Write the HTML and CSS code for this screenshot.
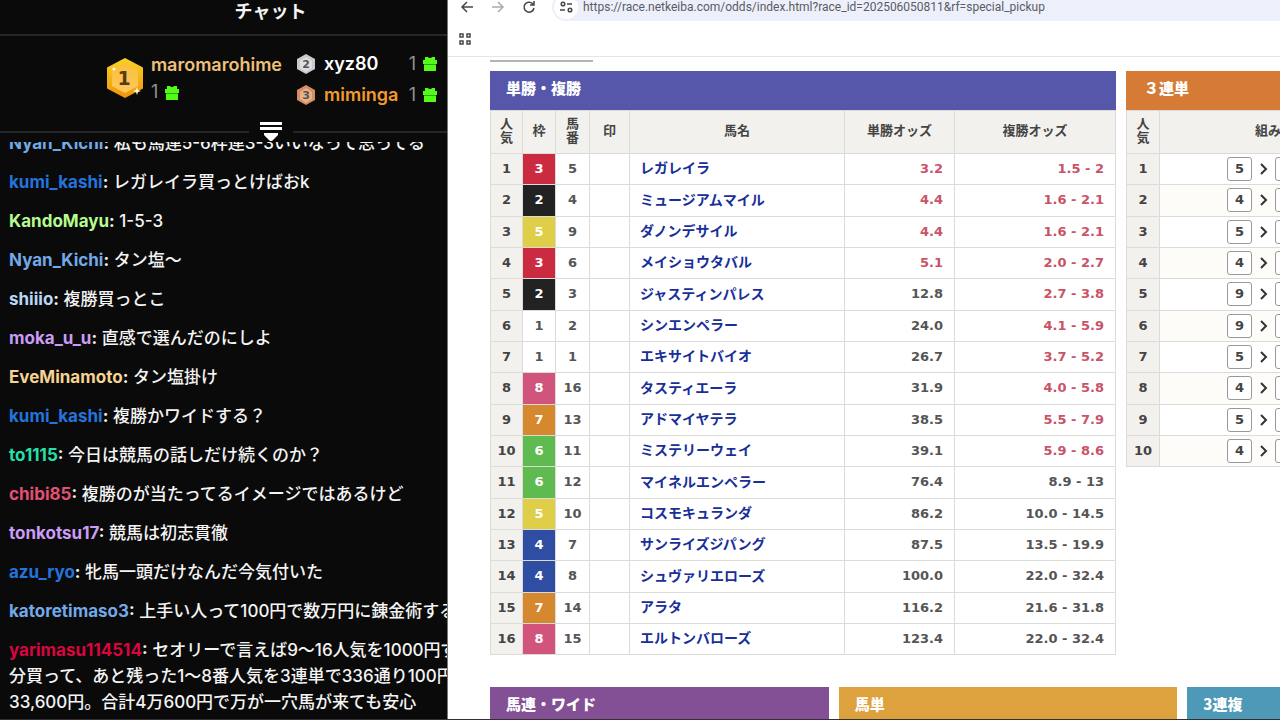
FILE: index.html
```
<!DOCTYPE html>
<html lang="ja">
<head>
<meta charset="utf-8">
<title>チャット</title>
<link rel="stylesheet" href="styles.css">
</head>
<body>
<svg class="defs" aria-hidden="true">
  <defs>
    <linearGradient id="gold" x1="0" y1="0" x2="0" y2="1"><stop offset="0" stop-color="#f9d423"/><stop offset="1" stop-color="#f0930c"/></linearGradient>
    <linearGradient id="goldin" x1="0" y1="0" x2="0" y2="1"><stop offset="0" stop-color="#fbbf38"/><stop offset="1" stop-color="#fdc861"/></linearGradient>
    <symbol id="gift" viewBox="0 0 14 15"><path fill="#53fc18" d="M2 1h3l1 1h2l1-1h3v3h2v4H0V4h2zM1 9h12v6H1z"/><path fill="#2da80c" d="M1 8h12v1H1z"/></symbol>
    <symbol id="chev" viewBox="0 0 10 12"><path d="M2 1l5 5-5 5" fill="none" stroke="#333" stroke-width="2"/></symbol>
  </defs>
</svg>
<div class="app">
  <aside class="chat">
    <h1 class="chat-title">チャット</h1>
    <section class="leaders">
      <div class="leader first">
        <svg class="medal-lg" viewBox="0 0 36 40"><path d="M18 0l18 9.500v21L18 40 0 30.500v-21z" fill="url(#gold)"/><path d="M18 5l13 7v16l-13 7-13-7V12z" fill="url(#goldin)"/><path d="M30 29l1 3 3 1-3 1-1 3-1-3-3-1 3-1zM7 9l1 1 1 1-1 1-1 1-1-1-1-1 1-1z" fill="#fff8dc"/><text x="17" y="27" text-anchor="middle" class="medal-num big">1</text></svg>
        <div class="leader-text">
          <span class="leader-name gold">maromarohime</span>
          <span class="gifts">1 <svg class="gift"><use href="#gift"/></svg></span>
        </div>
      </div>
      <div class="leader-list">
        <svg class="medal" viewBox="0 0 20 22"><path d="M10 1l9 5v10l-9 5-9-5V6z" fill="#c9cacc"/><path d="M10 4l6 4v7l-6 4-6-4V8z" fill="#dedfe1"/><text x="10" y="15" text-anchor="middle" class="medal-num">2</text></svg>
        <span class="leader-name white">xyz80</span>
        <span class="gifts">1 <svg class="gift"><use href="#gift"/></svg></span>
        <svg class="medal" viewBox="0 0 20 22"><path d="M10 1l9 5v10l-9 5-9-5V6z" fill="#d98d5f"/><path d="M10 4l6 4v7l-6 4-6-4V8z" fill="#e5b18b"/><text x="10" y="15" text-anchor="middle" class="medal-num">3</text></svg>
        <span class="leader-name orange">miminga</span>
        <span class="gifts">1 <svg class="gift"><use href="#gift"/></svg></span>
      </div>
    </section>
    <div class="divider">
      <button class="collapse" aria-label="展開"><svg viewBox="0 0 22 20"><path fill="#fff" d="M0 0h22v3H0zM0 5h22v3H0zM4 11h14v2l-6 6h-2l-6-6z"/></svg></button>
    </div>
    <div class="messages">
      <p><b class="c-sky">Nyan_Kichi</b><b>:</b> 私も馬連5-6枠連3-3いいなって思ってる</p>
      <p><b class="c-blue">kumi_kashi</b><b>:</b> レガレイラ買っとけばおk</p>
      <p><b class="c-lime">KandoMayu</b><b>:</b> 1-5-3</p>
      <p><b class="c-sky">Nyan_Kichi</b><b>:</b> タン塩～</p>
      <p><b class="c-ice">shiiio</b><b>:</b> 複勝買っとこ</p>
      <p><b class="c-violet">moka_u_u</b><b>:</b> 直感で選んだのにしよ</p>
      <p><b class="c-sand">EveMinamoto</b><b>:</b> タン塩掛け</p>
      <p><b class="c-blue">kumi_kashi</b><b>:</b> 複勝かワイドする？</p>
      <p><b class="c-teal">to1115</b><b>:</b> 今日は競馬の話しだけ続くのか？</p>
      <p><b class="c-rose">chibi85</b><b>:</b> 複勝のが当たってるイメージではあるけど</p>
      <p><b class="c-violet">tonkotsu17</b><b>:</b> 競馬は初志貫徹</p>
      <p><b class="c-blue">azu_ryo</b><b>:</b> 牝馬一頭だけなんだ今気付いた</p>
      <p><b class="c-sky">katoretimaso3</b><b>:</b> 上手い人って100円で数万円に錬金術する</p>
      <p><b class="c-red">yarimasu114514</b><b>:</b> セオリーで言えば9～16人気を1000円ず<br>分買って、あと残った1～8番人気を3連単で336通り100円<br>33,600円。合計4万600円で万が一穴馬が来ても安心</p>
    </div>
  </aside>

  <main class="browser">
    <div class="toolbar">
      <button aria-label="戻る"><svg viewBox="0 0 16 16"><path d="M14 8H3M8 3L3 8l5 5" class="ln"/></svg></button>
      <button class="dim" aria-label="進む"><svg viewBox="0 0 16 16"><path d="M2 8h11M8 3l5 5-5 5" class="ln"/></svg></button>
      <button aria-label="再読み込み"><svg viewBox="0 0 16 16"><path d="M13 9a5 5 0 1 1-1.500-4.500L13 6M13 2v4H9" class="ln"/></svg></button>
      <div class="omnibox">
        <button class="site" aria-label="サイト情報"><svg viewBox="0 0 16 16"><circle cx="5" cy="5" r="1.800" class="ln"/><path d="M9 5h5M2 11h5" class="ln"/><circle cx="12" cy="11" r="1.800" class="ln"/></svg></button>
        <input type="text" aria-label="アドレス" value="https://race.netkeiba.com/odds/index.html?race_id=202506050811&amp;rf=special_pickup">
      </div>
    </div>
    <div class="bookmarks"><button aria-label="アプリ"><svg viewBox="0 0 14 14"><path d="M2 2h3v3H2zM9 2h3v3H9zM2 9h3v3H2zM9 9h3v3H9z" class="ln"/></svg></button></div>
    <div class="page">
      <div class="tab-edge"></div>
      <div class="row top">
        <section>
          <h2 class="bg-indigo">単勝・複勝</h2>
          <table class="odds">
            <colgroup><col class="w-rank"><col class="w-frame"><col class="w-num"><col class="w-mark"><col><col class="w-win"><col class="w-place"></colgroup>
            <thead><tr><th>人<br>気</th><th>枠</th><th>馬<br>番</th><th>印</th><th>馬名</th><th>単勝オッズ</th><th>複勝オッズ</th></tr></thead>
            <tbody>
              <tr><th>1</th><td class="f3">3</td><td>5</td><td></td><td><a href="#">レガレイラ</a></td><td class="hot">3.2</td><td class="hot">1.5 - 2</td></tr>
              <tr><th>2</th><td class="f2">2</td><td>4</td><td></td><td><a href="#">ミュージアムマイル</a></td><td class="hot">4.4</td><td class="hot">1.6 - 2.1</td></tr>
              <tr><th>3</th><td class="f5">5</td><td>9</td><td></td><td><a href="#">ダノンデサイル</a></td><td class="hot">4.4</td><td class="hot">1.6 - 2.1</td></tr>
              <tr><th>4</th><td class="f3">3</td><td>6</td><td></td><td><a href="#">メイショウタバル</a></td><td class="hot">5.1</td><td class="hot">2.0 - 2.7</td></tr>
              <tr><th>5</th><td class="f2">2</td><td>3</td><td></td><td><a href="#">ジャスティンパレス</a></td><td>12.8</td><td class="hot">2.7 - 3.8</td></tr>
              <tr><th>6</th><td>1</td><td>2</td><td></td><td><a href="#">シンエンペラー</a></td><td>24.0</td><td class="hot">4.1 - 5.9</td></tr>
              <tr><th>7</th><td>1</td><td>1</td><td></td><td><a href="#">エキサイトバイオ</a></td><td>26.7</td><td class="hot">3.7 - 5.2</td></tr>
              <tr><th>8</th><td class="f8">8</td><td>16</td><td></td><td><a href="#">タスティエーラ</a></td><td>31.9</td><td class="hot">4.0 - 5.8</td></tr>
              <tr><th>9</th><td class="f7">7</td><td>13</td><td></td><td><a href="#">アドマイヤテラ</a></td><td>38.5</td><td class="hot">5.5 - 7.9</td></tr>
              <tr><th>10</th><td class="f6">6</td><td>11</td><td></td><td><a href="#">ミステリーウェイ</a></td><td>39.1</td><td class="hot">5.9 - 8.6</td></tr>
              <tr><th>11</th><td class="f6">6</td><td>12</td><td></td><td><a href="#">マイネルエンペラー</a></td><td>76.4</td><td>8.9 - 13</td></tr>
              <tr><th>12</th><td class="f5">5</td><td>10</td><td></td><td><a href="#">コスモキュランダ</a></td><td>86.2</td><td>10.0 - 14.5</td></tr>
              <tr><th>13</th><td class="f4">4</td><td>7</td><td></td><td><a href="#">サンライズジパング</a></td><td>87.5</td><td>13.5 - 19.9</td></tr>
              <tr><th>14</th><td class="f4">4</td><td>8</td><td></td><td><a href="#">シュヴァリエローズ</a></td><td>100.0</td><td>22.0 - 32.4</td></tr>
              <tr><th>15</th><td class="f7">7</td><td>14</td><td></td><td><a href="#">アラタ</a></td><td>116.2</td><td>21.6 - 31.8</td></tr>
              <tr><th>16</th><td class="f8">8</td><td>15</td><td></td><td><a href="#">エルトンバローズ</a></td><td>123.4</td><td>22.0 - 32.4</td></tr>
            </tbody>
          </table>
        </section>
        <section>
          <h2 class="bg-orange">３連単</h2>
          <table class="combo">
            <colgroup><col class="w-rank"><col></colgroup>
            <thead><tr><th>人<br>気</th><th>組み合わせ</th></tr></thead>
            <tbody>
              <tr><th>1</th><td><div class="pick"><i>5</i><svg><use href="#chev"/></svg><i></i></div></td></tr>
              <tr><th>2</th><td><div class="pick"><i>4</i><svg><use href="#chev"/></svg><i></i></div></td></tr>
              <tr><th>3</th><td><div class="pick"><i>5</i><svg><use href="#chev"/></svg><i></i></div></td></tr>
              <tr><th>4</th><td><div class="pick"><i>4</i><svg><use href="#chev"/></svg><i></i></div></td></tr>
              <tr><th>5</th><td><div class="pick"><i>9</i><svg><use href="#chev"/></svg><i></i></div></td></tr>
              <tr><th>6</th><td><div class="pick"><i>9</i><svg><use href="#chev"/></svg><i></i></div></td></tr>
              <tr><th>7</th><td><div class="pick"><i>5</i><svg><use href="#chev"/></svg><i></i></div></td></tr>
              <tr><th>8</th><td><div class="pick"><i>4</i><svg><use href="#chev"/></svg><i></i></div></td></tr>
              <tr><th>9</th><td><div class="pick"><i>5</i><svg><use href="#chev"/></svg><i></i></div></td></tr>
              <tr><th>10</th><td><div class="pick"><i>4</i><svg><use href="#chev"/></svg><i></i></div></td></tr>
            </tbody>
          </table>
        </section>
      </div>
      <div class="row bottom">
        <h2 class="bg-purple">馬連・ワイド</h2>
        <h2 class="bg-gold">馬単</h2>
        <h2 class="bg-cyan">3連複</h2>
      </div>
    </div>
  </main>
</div>
</body>
</html>
```

FILE: styles.css
```
* { box-sizing: border-box; }
body { margin: 0; overflow: hidden; background: #fff; }
h1, h2, p { margin: 0; }
button { border: 0; padding: 0; background: none; display: flex; align-items: center; justify-content: center; }
.defs { position: absolute; width: 0; height: 0; }
.app { display: flex; height: 100vh; overflow: hidden; border-bottom: 1px solid #332f33; }

/* chat */
.chat { flex: 0 0 35%; min-width: 0; overflow: hidden; display: flex; flex-direction: column; background: #0a0a0a; border-right: 1px solid #777; color: #f4f4f4; font-family: Inter, "Noto Sans CJK JP", sans-serif; }
.chat-title { padding: 0 0 11px 94px; line-height: 23px; font-size: 18px; font-weight: 700; text-align: center; border-bottom: 2px solid #262626; }
.leaders { display: flex; justify-content: flex-end; gap: 14px; padding: 12px 10px 0 0; height: 86px; }
.first { display: flex; align-items: center; gap: 8px; height: 60px; }
.leader-text { display: flex; flex-direction: column; }
.leader-text .leader-name { line-height: 28px; }
.leader-text .gifts { line-height: 26px; }
.medal-lg { width: 36px; height: 40px; }
.medal { width: 20px; height: 22px; }
.medal-num { font: 700 11px "DejaVu Sans", sans-serif; fill: #555; }
.medal-num.big { font-size: 19px; fill: #5a3c10; }
.leader-name { font-size: 18px; font-weight: 600; }
.gold { color: #eec07a; }
.white { color: #fff; }
.orange { color: #f39a2c; }
.gifts { display: flex; align-items: center; gap: 7px; font-size: 18px; color: #929292; }
.gift { width: 14px; height: 15px; }
.leader-list { display: grid; grid-template-columns: 20px 75px 30px; grid-auto-rows: 31px; column-gap: 8px; align-items: center; }
.leader-list .gifts { justify-content: flex-end; }
.divider { display: flex; align-items: center; height: 20px; }
.divider::before, .divider::after { content: ""; height: 2px; background: #262626; }
.divider::before { width: 249px; margin-right: 11px; }
.divider::after { flex: 1; margin-left: 11px; }
.collapse svg { width: 22px; height: 20px; }
.messages { flex: 1; min-height: 0; overflow: hidden; display: flex; flex-direction: column; justify-content: flex-end; gap: 13px; padding: 0 0 4px 9px; font-size: 17px; line-height: 26px; font-weight: 500; white-space: nowrap; }
.messages b { font-weight: 700; }
.c-sky { color: #72a9e8; }
.c-blue { color: #2374dc; }
.c-lime { color: #b5fb8f; }
.c-ice { color: #b9d8f5; }
.c-violet { color: #cb9cf5; }
.c-sand { color: #f7d390; }
.c-teal { color: #27dfa8; }
.c-rose { color: #e35075; }
.c-red { color: #d8063f; }

/* browser */
.browser { flex: 1; min-width: 0; overflow: hidden; display: flex; flex-direction: column; }
.toolbar { display: flex; align-items: center; height: 28px; margin-top: -7px; padding-left: 11px; gap: 15px; flex: none; }
.toolbar > button, .site svg { width: 16px; height: 16px; }
.toolbar svg { width: 16px; height: 16px; }
.ln { fill: none; stroke: #474747; stroke-width: 1.5; }
.dim { opacity: .45; }
.omnibox { flex: 1; height: 28px; display: flex; align-items: center; gap: 5px; padding-left: 2px; background: #edf0fb; border-radius: 14px 0 0 14px; }
.site { width: 24px; height: 24px; border-radius: 50%; background: #fff; }
.omnibox input { flex: 1; min-width: 0; border: 0; padding: 0; background: none; color: #5a5c62; font: 12px Roboto, sans-serif; }
.bookmarks { flex: none; height: 36px; padding: 11px 0 0 10px; border-bottom: 1px solid #e6e6e6; }
.bookmarks svg { width: 14px; height: 14px; }
.page { width: 1078px; padding: 3px 0 0 42px; font-family: "DejaVu Sans", "Noto Sans CJK JP", sans-serif; }
.tab-edge { width: 103px; height: 2px; background: #b4b4b4; }
.row { display: grid; gap: 10px; align-items: start; }
.top { grid-template-columns: 626px 1fr; margin-top: 9px; }
.bottom { grid-template-columns: repeat(3, 1fr); margin-top: 32px; }
h2 { height: 39px; padding-left: 16px; line-height: 34px; color: #fff; font-family: "Noto Sans CJK JP", sans-serif; font-size: 15px; font-weight: 900; }
.bg-indigo { background: #5657aa; }
.bg-orange { background: #d57b35; padding-left: 18px; }
.bg-purple { background: #835095; }
.bg-gold { background: #dda23e; }
.bg-cyan { background: #4f99b8; }
table { width: 100%; table-layout: fixed; border-collapse: collapse; font-size: 13px; font-weight: 700; color: #555; }
.w-rank { width: 32px; }
.w-frame { width: 33px; }
.w-num { width: 34px; }
.w-mark { width: 40px; }
.w-win { width: 110px; }
.w-place { width: 161px; }
th, td { padding: 0 0 1px; border: 1px solid #dbdbd7; text-align: center; line-height: 18px; }
th { background: #f2f1ed; color: #444; }
thead th { height: 43px; line-height: 14px; padding-bottom: 2px; }
tbody tr { height: 31px; }
tbody tr:nth-child(3n+2) { height: 32px; }
.odds td:nth-child(5) { padding-left: 10px; text-align: left; }
.odds td:nth-child(n+6) { padding-right: 11px; text-align: right; }
.odds a { color: #182f98; font-size: 14px; text-decoration: none; }
.odds td.hot { color: #c95367; }
.f2, .f3, .f4, .f5, .f6, .f7, .f8 { color: #fff; }
.f2 { background: #222; }
.f3 { background: #cb2b40; }
.f4 { background: #2e4da3; }
.f5 { background: #dfce48; }
.f6 { background: #5fba50; }
.f7 { background: #d5882e; }
.f8 { background: #d0547c; }
.combo { width: 290px; }
.combo .w-rank { width: 33px; }
.combo tr:nth-child(even) td { background: #fdfcf8; }
.pick { display: flex; align-items: center; padding-left: 67px; }
.pick i { width: 25px; height: 24px; line-height: 22px; border: 1px solid #999; border-radius: 3px; background: #fff; color: #444; font-style: normal; }
.pick svg { width: 10px; height: 12px; margin: 0 6px 0 7px; }
```
